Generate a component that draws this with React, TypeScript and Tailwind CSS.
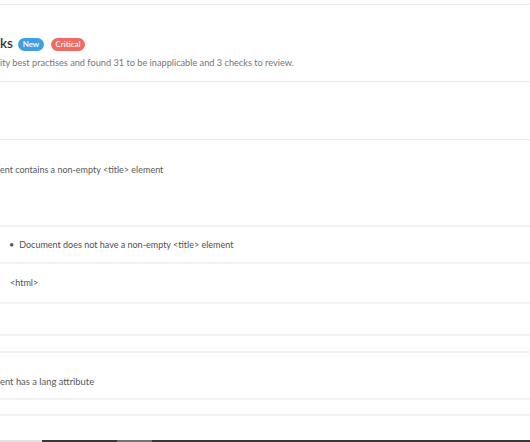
import React from "react";

const font = { fontFamily: "Lato, 'Open Sans', Arial, sans-serif" };

function Badge({ label, tone }: { label: string; tone: "blue" | "red" }) {
  return (
    <span
      className={
        "inline-flex h-[13px] items-center justify-center rounded-full text-[8px] font-semibold leading-none text-white " +
        (tone === "blue" ? "bg-[#3f9fe4] w-[26px] ml-[5px]" : "bg-[#ef6b63] w-[34px] ml-[7px]")
      }
    >
      {label}
    </span>
  );
}

export default function App() {
  return (
    <div className="h-[442px] w-[530px] overflow-hidden bg-white flex flex-col" style={font}>
      {/* top edge of the card above */}
      <div className="h-[5px] shrink-0 border-b border-[#ebebeb]" />

      {/* Section header */}
      <div className="h-[77px] shrink-0 border-b border-[#e8e8e8] flex flex-col pt-[31px]">
        <div className="flex items-center h-[16px]">
          <span className="text-[13.5px] font-semibold text-[#2f2f2f] leading-none">ks</span>
          <Badge label="New" tone="blue" />
          <Badge label="Critical" tone="red" />
        </div>
        <p className="mt-[5px] text-[9.2px] leading-[12px] text-[#767676] whitespace-nowrap">
          ity best practises and found 31 to be inapplicable and 3 checks to review.
        </p>
      </div>

      <div className="h-[58px] shrink-0 border-b border-[#ebeeee]" />

      {/* Check: document title */}
      <div className="h-[87px] shrink-0 border-b-2 border-[#f0f0f0] pt-[24px]">
        <p className="text-[9px] leading-[12px] text-[#585858] whitespace-nowrap">
          ent contains a non-empty &lt;title&gt; element
        </p>
      </div>

      <div className="h-[37px] shrink-0 border-b-2 border-[#f0f0f0] flex items-center pl-[9px]">
        <span className="mr-[5px] text-[#555] text-[9px] leading-none">•</span>
        <span className="text-[9px] leading-[12px] text-[#505050] whitespace-nowrap">
          Document does not have a non-empty &lt;title&gt; element
        </span>
      </div>

      <div className="h-[40px] shrink-0 border-b-2 border-[#f0f0f0] flex items-center pl-[10px]">
        <span className="text-[9px] leading-[12px] text-[#505050]">&lt;html&gt;</span>
      </div>

      <div className="h-[32px] shrink-0 border-b-2 border-[#f2f2f2]" />
      <div className="h-[17px] shrink-0 border-b-2 border-[#f0f0f0]" />

      {/* Check: lang attribute */}
      <div className="h-[47px] shrink-0 border-b-2 border-[#f0f0f0] pt-[23px]">
        <p className="text-[9.4px] leading-[12px] text-[#585858] whitespace-nowrap">
          ent has a lang attribute
        </p>
      </div>

      <div className="h-[16px] shrink-0 border-b-2 border-[#f2f2f2]" />

      <div className="flex-1" />

      {/* scroll strip at the bottom */}
      <div className="h-[2px] shrink-0 flex">
        <div className="w-[42px] bg-[#e3e3e3]" />
        <div className="w-[75px] bg-[#383838]" />
        <div className="w-[35px] bg-[#727272]" />
        <div className="flex-1 bg-[#383838]" />
      </div>
    </div>
  );
}
